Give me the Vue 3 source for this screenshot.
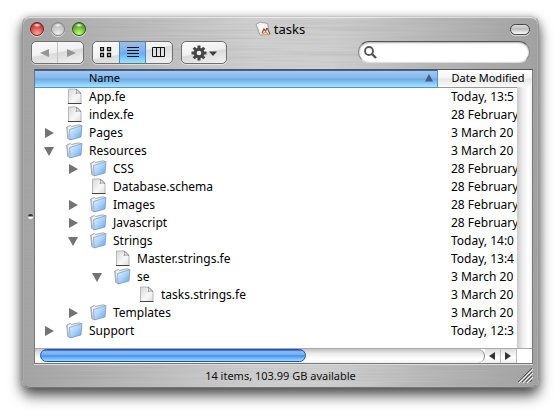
<script setup>
import { ref, computed } from 'vue'

const files = ref([
  { name: 'App.fe', level: 0, kind: 'file', date: 'Today, 13:5' },
  { name: 'index.fe', level: 0, kind: 'file', date: '28 February' },
  { name: 'Pages', level: 0, kind: 'folder', open: false, date: '3 March 20' },
  { name: 'Resources', level: 0, kind: 'folder', open: true, date: '3 March 20' },
  { name: 'CSS', level: 1, kind: 'folder', open: false, date: '28 February' },
  { name: 'Database.schema', level: 1, kind: 'file', date: '28 February' },
  { name: 'Images', level: 1, kind: 'folder', open: false, date: '28 February' },
  { name: 'Javascript', level: 1, kind: 'folder', open: false, date: '28 February' },
  { name: 'Strings', level: 1, kind: 'folder', open: true, date: 'Today, 14:0' },
  { name: 'Master.strings.fe', level: 2, kind: 'file', date: 'Today, 13:4' },
  { name: 'se', level: 2, kind: 'folder', open: true, date: '3 March 20' },
  { name: 'tasks.strings.fe', level: 3, kind: 'file', date: '3 March 20' },
  { name: 'Templates', level: 1, kind: 'folder', open: false, date: '3 March 20' },
  { name: 'Support', level: 0, kind: 'folder', open: false, date: 'Today, 12:3' }
])

const rows = computed(() => {
  let hiddenBelow = Infinity
  return files.value.filter((f) => {
    if (f.level > hiddenBelow) return false
    hiddenBelow = f.kind === 'folder' && !f.open ? f.level : Infinity
    return true
  })
})

const view = ref('list')
const query = ref('')
</script>

<template>
  <main class="desktop">
    <section class="window">
      <svg class="metal" aria-hidden="true">
        <filter id="brush" x="0" y="0" width="100%" height="100%">
          <feTurbulence type="fractalNoise" baseFrequency="0.008 0.7" numOctaves="2" seed="4" />
          <feColorMatrix values="0 0 0 0 0.3  0 0 0 0 0.3  0 0 0 0 0.3  1.2 0 0 0 -0.48" />
        </filter>
        <rect width="100%" height="100%" filter="url(#brush)" />
      </svg>

      <header class="titlebar">
        <div class="lights">
          <button class="light red" aria-label="Close"></button>
          <button class="light grey" aria-label="Minimise"></button>
          <button class="light green" aria-label="Zoom"></button>
        </div>
        <h1>
          <svg width="17" height="16" viewBox="0 0 17 16">
            <path d="M1 3.500 5 1l7.500 1.500 2 11L5 14z" fill="#fafafa" stroke="#8b8b8b" stroke-width=".8" />
            <path d="M3 4.500 9 2l3.500 9.500L6 13z" fill="#fff" stroke="#ccc" stroke-width=".5" />
            <path d="m7 12 2-4 1.500 2L12 7" fill="none" stroke="#b03a24" stroke-width="1.200" />
            <path d="m7 13 4-2 3 3" fill="none" stroke="#e0962d" stroke-width="1.200" />
            <path d="m12 7 3 6" stroke="#555" />
          </svg>
          <span>tasks</span>
        </h1>
        <button class="pill" aria-label="Toggle toolbar"></button>
      </header>

      <div class="toolbar">
        <div class="group nav">
          <button aria-label="Back"><svg width="10" height="10"><path d="M9 1v8L0 5z" fill="#959595" /></svg></button>
          <button aria-label="Forward"><svg width="10" height="10"><path d="M1 1v8l9-4z" fill="#959595" /></svg></button>
        </div>
        <div class="group views">
          <button aria-label="Icon view" :class="{ on: view === 'icon' }" @click="view = 'icon'">
            <svg width="12" height="11" viewBox="0 0 12 11" fill="none" stroke="#111">
              <path d="M.5.5h3v3h-3zM7.500.5h3v3h-3zM.5 6.500h3v3h-3zM7.500 6.500h3v3h-3z" stroke-width="1.300" />
            </svg>
          </button>
          <button aria-label="List view" :class="{ on: view === 'list' }" @click="view = 'list'">
            <svg width="12" height="11" viewBox="0 0 12 11"><path d="M0 .5h12M0 3.500h12M0 6.500h12M0 9.500h12" stroke="#111" /></svg>
          </button>
          <button aria-label="Column view" :class="{ on: view === 'column' }" @click="view = 'column'">
            <svg width="14" height="11" viewBox="0 0 14 11"><path d="M.5.5h12v9H.5zM4.500.5v9M8.500.5v9" fill="none" stroke="#111" /></svg>
          </button>
        </div>
        <div class="group action">
          <button aria-label="Action">
            <svg width="26" height="16" viewBox="0 0 26 16">
              <g stroke="#454545" stroke-width="3">
                <path d="M8 .5v15M.5 8h15M2.700 2.700l10.600 10.600M13.300 2.700 2.700 13.300" />
              </g>
              <circle cx="8" cy="8" r="5.300" fill="#454545" />
              <circle cx="8" cy="8" r="2.300" fill="#eee" />
              <path d="M18 6.500h8L22 11z" fill="#3c3c3c" />
            </svg>
          </button>
        </div>
        <label class="search">
          <svg width="13" height="13" viewBox="0 0 13 13" fill="none" stroke="#555">
            <circle cx="5" cy="5" r="4" stroke-width="1.800" /><path d="m8 8 4 4" stroke-width="2.400" />
          </svg>
          <input v-model="query" type="search" aria-label="Search" />
        </label>
      </div>

      <div class="content">
        <div class="splitter"><i></i></div>
        <div class="panel">
          <div class="listing">
            <table>
              <colgroup><col /><col class="date-col" /></colgroup>
              <thead>
                <tr>
                  <th class="sorted">
                    <div><span>Name</span><svg width="8" height="8"><path d="M4 0 8 7.500H0z" fill="#3c5f85" /></svg></div>
                  </th>
                  <th class="date">Date Modified</th>
                </tr>
              </thead>
              <tbody>
                <tr v-for="f in rows" :key="f.name">
                  <td>
                    <div class="entry" :style="{ paddingLeft: 9 + f.level * 24 + 'px' }">
                      <button v-if="f.kind === 'folder'" class="twist" :aria-expanded="f.open" :aria-label="f.name" @click="f.open = !f.open">
                        <svg width="10" height="10">
                          <path :d="f.open ? 'M0 1h10L5 10z' : 'M1 0v10l9-5z'" fill="#737373" />
                        </svg>
                      </button>
                      <span v-else class="twist"></span>
                      <svg v-if="f.kind === 'folder'" class="icon" width="18" height="17" viewBox="0 0 18 17">
                        <defs>
                          <linearGradient id="blue" x1="0" y1="0" x2="1" y2="1">
                            <stop offset="0" stop-color="#eaf5ff" /><stop offset=".5" stop-color="#a9d2fa" /><stop offset="1" stop-color="#5e9fec" />
                          </linearGradient>
                        </defs>
                        <path d="M.8 3 4.500 1.500l1 1L13 .8l2 .7-1 11-10 3-2.300-1z" fill="#eef2f6" stroke="#8b9299" stroke-width=".8" />
                        <path d="m3.500 5.500 12.500-4-1 11.500-11 3z" fill="url(#blue)" stroke="#7393b8" stroke-width=".7" />
                        <path d="M.8 3 3 15" stroke="#a5abb1" stroke-width=".7" />
                      </svg>
                      <svg v-else class="icon" width="18" height="17" viewBox="0 0 18 17">
                        <defs>
                          <linearGradient id="paper" x1="0" y1="0" x2="1" y2="1">
                            <stop offset="0" stop-color="#d8d8d8" /><stop offset=".6" stop-color="#f8f8f8" /><stop offset="1" stop-color="#dcdcdc" />
                          </linearGradient>
                        </defs>
                        <path d="M2.500 1h8l4.500 4.500v10H2.500z" fill="url(#paper)" stroke="#aaa" stroke-width=".8" />
                        <path d="M10 1c1 1.500 1 3 0 4.500 1.500-.8 3.500-.8 5 0z" fill="#fff" stroke="#7c7c7c" stroke-width=".8" />
                        <path d="M2 15.500h13.500" stroke="#444" />
                      </svg>
                      <span>{{ f.name }}</span>
                    </div>
                  </td>
                  <td class="date">{{ f.date }}</td>
                </tr>
              </tbody>
            </table>
            <div class="vtrack"></div>
          </div>
          <div class="hscroll">
            <div class="track"><div class="thumb"></div></div>
            <button aria-label="Scroll left"><svg width="7" height="8"><path d="M6 0v8L0 4z" fill="#333" /></svg></button>
            <button aria-label="Scroll right"><svg width="7" height="8"><path d="M0 0v8l6-4z" fill="#333" /></svg></button>
            <div class="corner"></div>
          </div>
        </div>
      </div>

      <footer>
        <span>14 items, 103.99 GB available</span>
        <svg class="grip" width="16" height="16" viewBox="0 0 16 16">
          <path d="M1 15 15 1M5 15 15 5M9 15l6-6M13 15l2-2" stroke="#555" />
          <path d="M2 16 16 2M6 16 16 6M10 16l6-6" stroke="#f4f4f4" />
        </svg>
      </footer>
    </section>
  </main>
</template>

<style>
body {
  margin: 0;
  background: #fff;
}
</style>

<style scoped>
* {
  box-sizing: border-box;
}
.desktop {
  padding: 16px 20px 27px 22px;
  font-family: "Lucida Grande", "Noto Sans", "Open Sans", sans-serif;
  font-size: 12px;
  color: #000;
}
button {
  margin: 0;
  padding: 0;
  border: 0;
  background: none;
  font: inherit;
}
svg {
  display: block;
  flex: none;
}
.window {
  position: relative;
  border-radius: 8px;
  border: 1px solid #999;
  border-top-color: #c8c8c8;
  border-bottom-color: #777;
  background: linear-gradient(90deg, #a4a4a4, #b4b4b4 15%, #d0d0d0 45%, #cecece 60%, #b2b2b2 85%, #a2a2a2);
  box-shadow: 0 8px 14px rgba(0, 0, 0, 0.6), 0 2px 8px rgba(0, 0, 0, 0.3), inset 0 1px 1px #eee;
}
.metal {
  position: absolute;
  inset: 0;
  width: 100%;
  height: 100%;
  border-radius: 7px;
  opacity: 0.4;
}
.titlebar,
.toolbar,
.content,
footer {
  position: relative;
}
.titlebar {
  display: grid;
  grid-template-columns: 1fr auto 1fr;
  align-items: center;
  height: 24px;
  padding: 0 8px 0 7px;
}
.lights {
  display: flex;
  gap: 7px;
}
.light {
  width: 14px;
  height: 14px;
  border-radius: 50%;
  border: 1px solid #555;
  box-shadow: 0 1px 0 rgba(255, 255, 255, 0.6);
}
.red {
  border-color: #722;
  background: radial-gradient(ellipse 4px 2px at 50% 18%, #fff, transparent), radial-gradient(circle at 50% 90%, #ffaaa0, #d84d48 55%, #922);
}
.grey {
  border-color: #888;
  background: radial-gradient(ellipse 4px 2px at 50% 18%, #fff, transparent), radial-gradient(circle at 50% 90%, #eee, #c4c4c4 60%, #999);
}
.green {
  border-color: #295a10;
  background: radial-gradient(ellipse 4px 2px at 50% 18%, #fff, transparent), radial-gradient(circle at 50% 90%, #c8ff80, #66ba33 55%, #2f7013);
}
h1 {
  display: flex;
  align-items: center;
  gap: 2px;
  margin: 0;
  font-size: 13px;
  font-weight: 400;
  line-height: 16px;
}
.pill {
  justify-self: end;
  width: 20px;
  height: 11px;
  border: 1px solid #444;
  border-radius: 6px;
  background: linear-gradient(#ddd, #bbb 45%, #fff);
  box-shadow: 0 1px 0 #ddd;
}
.toolbar {
  display: flex;
  gap: 8px;
  padding: 0 8px 5px;
}
.group {
  display: flex;
  height: 23px;
  border: 1px solid #707070;
  border-radius: 5px;
  background: linear-gradient(170deg, #fafafa, #f0f0f0 48%, #dadada 52%, #f2f2f2);
  box-shadow: 0 1px 0 rgba(255, 255, 255, 0.5);
}
.group button {
  flex: 1;
  display: flex;
  align-items: center;
  justify-content: center;
}
.nav {
  width: 53px;
}
.nav button + button {
  border-left: 1px solid #c4c4c4;
}
.views {
  width: 81px;
}
.views .on {
  border: solid #3f8ad0;
  border-width: 0 1px;
  background: linear-gradient(#9dbdec, #7db2ee 48%, #64adf0 52%, #98e4ff);
}
.action {
  width: 46px;
}
.search {
  display: flex;
  align-items: center;
  gap: 4px;
  width: 172px;
  height: 22px;
  margin-left: auto;
  padding: 0 8px 0 5px;
  border: 1px solid #8a8a8a;
  border-top-color: #555;
  border-bottom-color: #ddd;
  border-radius: 11px;
  background: #fff;
  box-shadow: inset 0 1px 2px #aaa;
}
.search input {
  flex: 1;
  min-width: 0;
  padding: 0;
  border: 0;
  outline: 0;
  background: transparent;
  font: inherit;
}
.content {
  display: flex;
  padding-right: 5px;
}
.splitter {
  flex: none;
  display: flex;
  align-items: center;
  justify-content: flex-end;
  width: 11px;
  padding-right: 1px;
}
.splitter i {
  width: 5px;
  height: 5px;
  border-radius: 50%;
  background: linear-gradient(#333 40%, #fff 60%);
}
.panel {
  flex: 1;
  min-width: 0;
  border: 1px solid #777;
  border-top-color: #555;
  background: #fff;
  box-shadow: 0 1px 0 #ddd;
}
.listing {
  position: relative;
  overflow: hidden;
  padding-bottom: 8px;
}
table {
  width: 100%;
  table-layout: fixed;
  border-collapse: collapse;
}
.date-col {
  width: 95px;
}
th {
  height: 17px;
  padding: 0;
  border-bottom: 1px solid #999;
  background: linear-gradient(#fff, #f4f4f4 48%, #e6e6e6 52%, #fbfbfb);
  font-size: 11px;
  font-weight: 400;
  line-height: 16px;
  text-align: left;
}
.sorted {
  border-bottom-color: #5593cb;
  border-right: 1px solid #5593cb;
  background: linear-gradient(#2f62b2 1px, #a5c8ef 1px, #86b7e9 48%, #6aa8e8 52%, #a6e6ff);
}
.sorted div {
  display: flex;
  align-items: center;
  justify-content: space-between;
  padding: 0 4px 0 54px;
}
td {
  height: 18px;
  padding: 0;
  line-height: 18px;
  white-space: nowrap;
}
.date {
  padding-left: 14px;
  white-space: nowrap;
}
.entry {
  display: flex;
  align-items: center;
  height: 18px;
}
.twist {
  flex: none;
  width: 10px;
  margin-right: 12px;
}
.icon {
  margin-right: 5px;
}
.vtrack {
  position: absolute;
  top: 17px;
  right: 0;
  bottom: 0;
  width: 15px;
  background: linear-gradient(90deg, #c9c9c9, #ececec 35%, #fff 75%, #f2f2f2);
}
.hscroll {
  display: flex;
  height: 15px;
  border-top: 1px solid #aaa;
}
.track {
  flex: 1;
  padding-left: 5px;
  border-radius: 0 8px 8px 0;
  border-right: 1px solid #888;
  background: linear-gradient(#c4c4c4, #ededed 35%, #fff 75%, #f0f0f0);
}
.thumb {
  width: 60%;
  height: 13px;
  border: 1px solid #2452b4;
  border-radius: 7px;
  background: linear-gradient(#2557cc, #8dbdf5 15%, #70adf2 45%, #4290ec 52%, #78c2fa 80%, #95dcff);
}
.hscroll button {
  display: flex;
  align-items: center;
  justify-content: center;
  width: 16px;
  background: linear-gradient(#ddd, #fff 60%, #eee);
  border-right: 1px solid #bbb;
}
.corner {
  width: 15px;
}
footer {
  display: grid;
  place-items: center;
  height: 23px;
  font-size: 11px;
  color: #111;
}
footer > * {
  grid-area: 1 / 1;
}
.grip {
  justify-self: end;
  margin-right: 5px;
}
</style>
